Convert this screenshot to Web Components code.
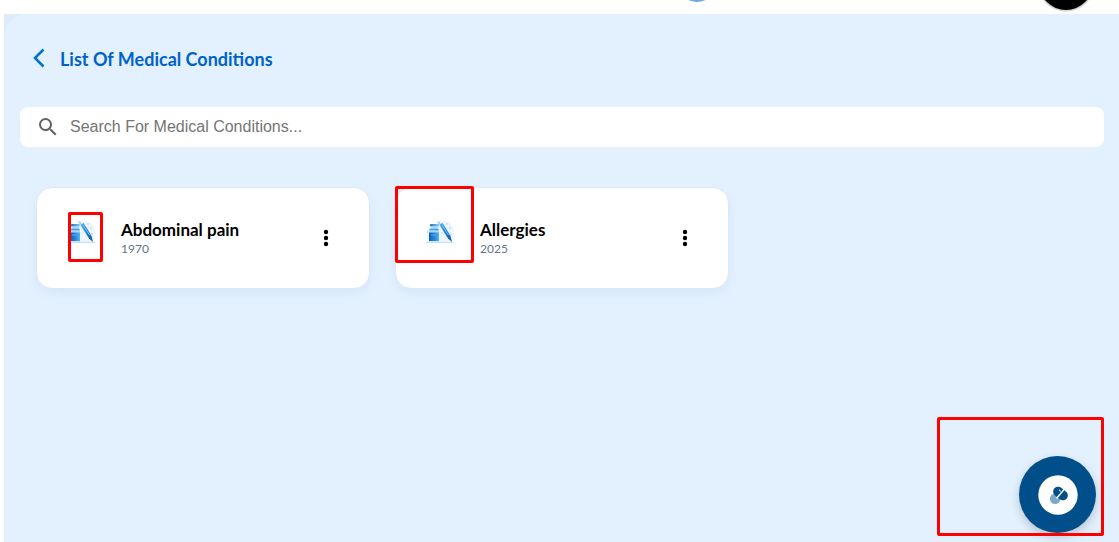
<!DOCTYPE html>
<html lang="en">
<head>
<meta charset="utf-8">
<title>List Of Medical Conditions</title>
<style>
html, body { margin: 0; background: #fff; }
body { font-family: Lato, "Open Sans", sans-serif; color: #000; }
</style>
</head>
<body>
<conditions-page></conditions-page>
<script>
const define = (name, markup) => {
  customElements.define(name, class extends HTMLElement {
    constructor() {
      super();
      const t = document.createElement('template');
      t.innerHTML = markup;
      this.attachShadow({ mode: 'open' }).append(t.content.cloneNode(true));
    }
  });
};

define('top-bar', `
<style>
:host { display: block; position: relative; height: 14px; overflow: hidden; }
svg { position: absolute; bottom: 0; }
.logo { left: 680px; }
.avatar { right: 20px; }
</style>
<svg class="logo" width="34" height="14" aria-hidden="true"><circle cx="17" cy="-17" r="19" fill="#6fa8dc"/></svg>
<svg class="avatar" width="64" height="14" aria-hidden="true"><circle cx="31" cy="-17" r="28.500" fill="#d2d2d2"/><circle cx="31" cy="-17" r="27" fill="#000"/></svg>
`);

define('page-heading', `
<style>
:host { display: flex; align-items: center; height: 28px; gap: 12px; padding-left: 10px; }
button { border: 0; padding: 0; background: none; display: flex; width: 18px; height: 28px; align-items: center; justify-content: center; cursor: pointer; }
h1 { margin: 0; padding-top: 2px; font-size: 18px; line-height: 26px; font-weight: 700; color: #0062c8; }
</style>
<button type="button" aria-label="Back"><svg width="14" height="20" viewBox="0 0 14 20" fill="none" stroke="#0074c8" stroke-width="2.6"><path d="M11.500 1.500 3 10l8.500 8.500"/></svg></button>
<h1><slot></slot></h1>
`);

define('search-field', `
<style>
:host { display: block; }
label { display: flex; align-items: center; gap: 10px; height: 40px; padding: 0 16px; border-radius: 8px; background: #fff; box-sizing: border-box; }
svg { flex: none; }
input { flex: 1; min-width: 0; border: 0; outline: 0; padding: 0; background: none; font: 16px/20px "Liberation Sans", Arial, sans-serif; color: #333; }
input::placeholder { color: #757575; opacity: 1; }
</style>
<label>
<svg width="24" height="24" viewBox="0 0 24 24" fill="#5f6368" aria-hidden="true"><path d="M15.500 14h-.79l-.28-.27A6.470 6.470 0 0 0 16 9.500 6.500 6.500 0 1 0 9.500 16c1.610 0 3.090-.59 4.230-1.570l.27.28v.79l5 4.990L20.490 19l-4.990-5zm-6 0C7.010 14 5 11.990 5 9.500S7.010 5 9.500 5 14 7.010 14 9.500 11.990 14 9.500 14z"/></svg>
<input type="search" aria-label="Search" placeholder="Search For Medical Conditions...">
</label>
`);

define('medicine-icon', `
<style>:host { display: block; width: 28px; height: 24px; } svg { display: block; }</style>
<svg width="28" height="24" viewBox="0 0 28 24" aria-hidden="true">
<defs>
<linearGradient id="b"><stop offset="0" stop-color="#0b5fb4"/><stop offset=".55" stop-color="#2389dd"/><stop offset="1" stop-color="#5bb2f2"/></linearGradient>
<linearGradient id="c"><stop offset="0" stop-color="#1674c5"/><stop offset="1" stop-color="#8cc8f5"/></linearGradient>
<linearGradient id="s" x1="0" x2="1" y1="0" y2="1"><stop offset="0" stop-color="#5db3f0"/><stop offset=".5" stop-color="#1c7fd0"/><stop offset="1" stop-color="#0a559f"/></linearGradient>
</defs>
<path d="M2 22C-1 15 0 8 6 7c4-1 4-6 11-6 6 0 11 5 11 11 0 4-1 7-2 10z" fill="#edf6fd"/>
<path d="M0 22.500h28" stroke="#c3dff7"/>
<g fill="#9cc7ec"><circle cx="21" cy="4" r=".7"/><circle cx="24" cy="8" r=".7"/><circle cx="25" cy="14" r=".7"/><circle cx="20" cy="9" r=".5"/><circle cx="1.500" cy="12" r=".7"/><circle cx="16" cy="13" r=".5"/></g>
<rect x="4" y="4" width="9" height="2.500" rx=".8" fill="url(#c)"/>
<path d="M5 6.500h7v2l1 2v11H3v-11l2-2z" fill="#a9d8f9"/>
<path d="M3.500 9.500h9" stroke="#4a9fe0" stroke-width="1.500"/>
<path d="M3 12.500h10V21H3z" fill="url(#b)"/><path d="M5 15h5" stroke="#8cc8f5" opacity=".6"/>
<path d="m12 1.500 3 4" stroke="#9dcbf3" stroke-width="1.500"/>
<path d="m13.500 5 3-2.200L24.500 16l1.500 6-4-3.500z" fill="url(#s)"/><path d="m16 5 6.500 10" stroke="#7dc2f4"/>
</svg>
`);

define('condition-card', `
<style>
:host { display: flex; align-items: center; position: relative; box-sizing: border-box; height: 102px; padding: 0 31px 0 30px; border: 1px solid #dfe8f2; border-radius: 16px; background: #fff; box-shadow: 0 4px 12px rgba(0, 70, 130, .06); }
medicine-icon { flex: none; margin-bottom: 12px; }
.text { flex: 1; min-width: 0; padding: 2px 0 0 26px; }
h2 { margin: 0; font-size: 17px; line-height: 20px; font-weight: 700; color: #000; }
p { margin: 0; font-size: 12px; line-height: 18px; color: #64748b; }
button { border: 0; padding: 0; width: 24px; height: 24px; background: none; cursor: pointer; }
svg { display: block; }
</style>
<medicine-icon></medicine-icon>
<div class="text"><h2><slot name="name"></slot></h2><p><slot name="year"></slot></p></div>
<button type="button" aria-label="More options"><svg width="24" height="24" viewBox="0 0 24 24"><circle cx="12" cy="6" r="2.200"/><circle cx="12" cy="12" r="2.200"/><circle cx="12" cy="18" r="2.200"/></svg></button>
<slot name="mark"></slot>
`);

define('highlight-box', `
<style>:host { display: block; position: absolute; box-sizing: border-box; border: 3px solid #f00; border-radius: 2px; pointer-events: none; }</style>
`);

define('add-button', `
<style>
:host { display: block; position: fixed; right: 23px; bottom: 9px; }
button { display: flex; align-items: center; justify-content: center; width: 77px; height: 77px; padding: 0; border: 0; border-radius: 50%; background: #004f8a; box-shadow: 0 4px 10px rgba(0, 0, 0, .2); cursor: pointer; }
</style>
<button type="button" aria-label="Add medical condition">
<svg width="40" height="40" viewBox="0 0 40 40" aria-hidden="true"><circle cx="20" cy="20" r="19.700" fill="#fff"/>
<circle cx="17.200" cy="23.800" r="5.300" fill="#80a7c5"/>
<g transform="rotate(38 22.500 18.500)"><rect x="14.500" y="13.500" width="16" height="10" rx="5" fill="#004f8a"/></g>
<path d="m18.500 23.500 7.500-9" stroke="#fff" stroke-width="1.400"/>
<path d="M21 14.800a1.800 1.800 0 0 1 1.300 1.800" stroke="#fff" fill="none"/></svg>
</button>
<slot></slot>
`);

define('conditions-page', `
<style>
:host { display: block; }
.back { margin-left: 4px; background: #dcecfa; }
main { box-sizing: border-box; min-height: calc(100vh - 14px); padding: 30px 15px 24px 16px; background: #e3f1ff; border-radius: 24px 0 0; }
search-field { margin-top: 35px; }
.grid { display: grid; grid-template-columns: repeat(3, minmax(0, 1fr)); gap: 25px; padding: 40px 16px 0; }
.narrow { left: 31px; top: 24px; width: 35px; height: 50px; }
.wide { left: -1px; top: -2px; width: 79px; height: 77px; }
.corner { right: -8px; bottom: -3px; width: 167px; height: 119px; }
</style>
<top-bar></top-bar>
<div class="back"><main>
<page-heading>List Of Medical Conditions</page-heading>
<search-field></search-field>
<div class="grid">
<condition-card><span slot="name">Abdominal pain</span><span slot="year">1970</span><highlight-box slot="mark" class="narrow"></highlight-box></condition-card>
<condition-card><span slot="name">Allergies</span><span slot="year">2025</span><highlight-box slot="mark" class="wide"></highlight-box></condition-card>
</div>
</main></div>
<add-button><highlight-box class="corner"></highlight-box></add-button>
`);
</script>
</body>
</html>
